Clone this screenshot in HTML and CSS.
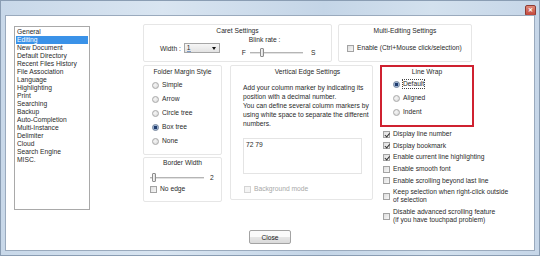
FILE: index.html
```html
<!DOCTYPE html>
<html lang="en">
<head>
    <meta charset="UTF-8">
    <title>Preferences</title>
    <link rel="stylesheet" href="styles.css">
</head>
<body>
    <div class="window">
        <div class="titlebar">
            <span class="close-x">&#10005;</span>
        </div>
        <div class="client">
            <div class="main">
                <ul class="pages">
                    <li>General</li>
                    <li class="selected">Editing</li>
                    <li>New Document</li>
                    <li>Default Directory</li>
                    <li>Recent Files History</li>
                    <li>File Association</li>
                    <li>Language</li>
                    <li>Highlighting</li>
                    <li>Print</li>
                    <li>Searching</li>
                    <li>Backup</li>
                    <li>Auto-Completion</li>
                    <li>Multi-Instance</li>
                    <li>Delimiter</li>
                    <li>Cloud</li>
                    <li>Search Engine</li>
                    <li>MISC.</li>
                </ul>

                <div class="settings">
                    <div class="row-top">
                        <div class="group caret">
                            <div class="group-title">Caret Settings</div>
                            <div class="caret-body">
                                <div class="width-field">
                                    <span>Width :</span>
                                    <span class="combo"><span class="combo-val">1</span><span class="combo-arrow"></span></span>
                                </div>
                                <div class="blink">
                                    <div class="blink-label">Blink rate :</div>
                                    <div class="slider-row">
                                        <span>F</span>
                                        <span class="track blink-track"><span class="thumb"></span></span>
                                        <span>S</span>
                                    </div>
                                </div>
                            </div>
                        </div>
                        <div class="group multi">
                            <div class="group-title">Multi-Editing Settings</div>
                            <label class="check multi-check"><span class="box"></span>Enable (Ctrl+Mouse click/selection)</label>
                        </div>
                    </div>

                    <div class="row-bottom">
                        <div class="col-folder">
                            <div class="group folder">
                                <div class="group-title">Folder Margin Style</div>
                                <div class="radios">
                                    <label class="radio"><span class="dot"></span>Simple</label>
                                    <label class="radio"><span class="dot"></span>Arrow</label>
                                    <label class="radio"><span class="dot"></span>Circle tree</label>
                                    <label class="radio"><span class="dot on"></span>Box tree</label>
                                    <label class="radio"><span class="dot"></span>None</label>
                                </div>
                            </div>
                            <div class="group border-width">
                                <div class="group-title">Border Width</div>
                                <div class="slider-row bw-row">
                                    <span class="track bw-track"><span class="thumb"></span></span>
                                    <span>2</span>
                                </div>
                                <label class="check edge-check"><span class="box"></span>No edge</label>
                            </div>
                        </div>

                        <div class="group vedge">
                            <div class="group-title">Vertical Edge Settings</div>
                            <p class="hint">Add your column marker by indicating its<br>position with a decimal number.<br>You can define several column markers by<br>using white space to separate the different<br>numbers.</p>
                            <div class="edge-input">72 79</div>
                            <label class="check disabled bg-check"><span class="box"></span>Background mode</label>
                        </div>

                        <div class="col-wrap">
                            <div class="group linewrap">
                                <div class="group-title">Line Wrap</div>
                                <div class="radios wrap-radios">
                                    <label class="radio"><span class="dot on"></span><span class="focus">Default</span></label>
                                    <label class="radio"><span class="dot"></span>Aligned</label>
                                    <label class="radio"><span class="dot"></span>Indent</label>
                                </div>
                            </div>
                            <div class="checks">
                                <label class="check"><span class="box on"></span>Display line number</label>
                                <label class="check"><span class="box on"></span>Display bookmark</label>
                                <label class="check"><span class="box on"></span>Enable current line highlighting</label>
                                <label class="check"><span class="box"></span>Enable smooth font</label>
                                <label class="check"><span class="box"></span>Enable scrolling beyond last line</label>
                                <label class="check"><span class="box"></span>Keep selection when right-click outside<br>of selection</label>
                                <label class="check"><span class="box"></span>Disable advanced scrolling feature<br>(if you have touchpad problem)</label>
                            </div>
                        </div>
                    </div>
                </div>
            </div>
            <div class="footer">
                <button class="close-btn">Close</button>
            </div>
        </div>
    </div>
</body>
</html>
```

FILE: styles.css
```css
body {
    margin: 0;
    padding: 0;
    font-family: "Liberation Sans", Arial, sans-serif;
    font-size: 6.7px;
    color: #2a2a2a;
    background: #fff;
}
.window {
    width: 540px;
    height: 256px;
    box-sizing: border-box;
    display: flex;
    flex-direction: column;
    background: linear-gradient(90deg, #c8d8e9, #d9e5f1 30%, #c4d5e7 60%, #d3e1ee 80%, #c6d6e8);
    border: 1px solid #8a9db3;
    padding: 0 4px 4px 4px;
}
.titlebar {
    height: 14px;
    display: flex;
    justify-content: flex-end;
    align-items: flex-start;
}
.close-x {
    width: 9px;
    height: 9px;
    margin-top: 4px;
    margin-right: -1px;
    border-radius: 2px;
    background: linear-gradient(#e08a7a, #c2463a);
    border: 1px solid #8e3b33;
    color: #fff;
    font-size: 6px;
    line-height: 9px;
    text-align: center;
    font-weight: bold;
}
.client {
    flex: 1;
    display: flex;
    flex-direction: column;
    background: #fff;
    border: 1px solid #9aaabd;
    padding: 8px 0 0 8px;
}
.main {
    display: flex;
    align-items: flex-start;
}
.pages {
    list-style: none;
    margin: 2px 0 0 0;
    padding: 1px;
    width: 76px;
    height: 184px;
    box-sizing: border-box;
    border: 1px solid #a9a9a9;
}
.pages li {
    height: 8px;
    line-height: 8px;
    padding-left: 1px;
    white-space: nowrap;
}
.pages li.selected {
    background: #3a92e8;
    color: #fff;
}
.settings {
    margin-left: 53px;
}
.group {
    box-sizing: border-box;
    border: 1px solid #e6e6e6;
    border-radius: 2px;
}
.group-title {
    text-align: center;
    line-height: 8px;
    white-space: nowrap;
}
.row-top {
    display: flex;
    gap: 6px;
}
.caret {
    width: 189px;
    height: 38px;
    padding-top: 2px;
}
.multi {
    width: 134px;
    height: 38px;
    padding-top: 2px;
}
.caret-body {
    display: flex;
    align-items: flex-start;
    padding-left: 16px;
}
.width-field {
    display: flex;
    align-items: center;
    gap: 3px;
    margin-top: 8px;
}
.combo {
    display: flex;
    align-items: center;
    justify-content: space-between;
    width: 36px;
    height: 10px;
    box-sizing: border-box;
    border: 1px solid #a6a6a6;
    background: linear-gradient(#f6f6f6, #e3e3e3);
    padding: 0 3px 0 2px;
}
.combo-val {
    border-bottom: 1px solid #7c9cc8;
    line-height: 7px;
}
.combo-arrow {
    width: 0;
    height: 0;
    border-left: 2.5px solid transparent;
    border-right: 2.5px solid transparent;
    border-top: 3px solid #111;
}
.blink {
    margin-left: 22px;
    margin-top: 1px;
}
.blink-label {
    line-height: 8px;
    padding-left: 7px;
}
.slider-row {
    display: flex;
    align-items: center;
    gap: 4px;
    margin-top: 4px;
    height: 9px;
}
.track {
    position: relative;
    height: 2px;
    background: #e2e2e2;
    border-top: 1px solid #b5b5b5;
    box-sizing: border-box;
}
.blink-track {
    width: 53px;
    margin-right: 4px;
}
.thumb {
    position: absolute;
    top: -5px;
    width: 4px;
    height: 9px;
    box-sizing: border-box;
    border: 1px solid #8d8d8d;
    border-radius: 1px;
    background: linear-gradient(90deg, #f8f8f8, #dcdcdc);
}
.blink-track .thumb {
    left: 10px;
}
.check {
    display: flex;
    align-items: center;
    gap: 3px;
    line-height: 8px;
    white-space: nowrap;
}
.box {
    flex: none;
    position: relative;
    width: 7px;
    height: 7px;
    box-sizing: border-box;
    border: 1px solid #a3a3a3;
    background: linear-gradient(135deg, #dedede, #f7f7f7);
}
.box.on::after {
    content: "";
    position: absolute;
    left: 1.5px;
    top: 0;
    width: 1.5px;
    height: 3.5px;
    border-right: 1px solid #333;
    border-bottom: 1px solid #333;
    transform: rotate(40deg);
}
.multi-check {
    margin: 9px 0 0 8px;
}
.row-bottom {
    display: flex;
    align-items: flex-start;
    margin-top: 3px;
}
.col-folder {
    width: 79px;
}
.folder {
    height: 90px;
    padding-top: 2px;
}
.radios {
    display: flex;
    flex-direction: column;
    gap: 6px;
    margin-top: 5px;
    padding-left: 8px;
}
.radio {
    display: flex;
    align-items: center;
    gap: 2px;
    line-height: 8px;
    white-space: nowrap;
}
.dot {
    flex: none;
    width: 7px;
    height: 7px;
    box-sizing: border-box;
    border-radius: 50%;
    border: 1px solid #a9a9a9;
    background: radial-gradient(circle at 40% 40%, #f6f6f6, #d6d6d6);
    margin-right: 1px;
}
.dot.on {
    border-color: #6d7f99;
    background: radial-gradient(circle, #1f3c6e 0 1.6px, #9bb3d3 2px, #e8eef6 3.5px);
}
.border-width {
    height: 45px;
    margin-top: 2px;
    padding-top: 1px;
}
.bw-row {
    gap: 6px;
    padding-left: 6px;
    margin-top: 6px;
}
.bw-track {
    width: 54px;
}
.bw-track .thumb {
    left: 2px;
}
.edge-check {
    margin: 3px 0 0 6px;
}
.vedge {
    width: 143px;
    height: 135px;
    margin-left: 8px;
    padding: 2px 0 0 12px;
}
.hint {
    margin: 7px 0 0 0;
    line-height: 9px;
    white-space: nowrap;
}
.edge-input {
    width: 119px;
    height: 36px;
    margin-top: 10px;
    box-sizing: border-box;
    border: 1px solid #e4e4e4;
    padding: 2px 2px;
    line-height: 8px;
}
.bg-check {
    margin: 11px 0 0 1px;
}
.check.disabled {
    color: #a8a8a8;
}
.check.disabled .box {
    border-color: #d4d4d4;
    background: #f4f4f4;
}
.col-wrap {
    margin-left: 7px;
}
.linewrap {
    width: 94px;
    height: 62px;
    border: 2px solid #cf2130;
    border-radius: 0;
    padding-top: 1px;
}
.wrap-radios {
    margin-top: 4px;
    padding-left: 11px;
}
.focus {
    outline: 1px dotted #444;
    outline-offset: 0;
}
.checks {
    display: flex;
    flex-direction: column;
    gap: 3.7px;
    margin-top: 3px;
    padding-left: 3px;
}
.footer {
    margin-top: auto;
    display: flex;
    justify-content: center;
    padding: 0 8px 6px 0;
}
.close-btn {
    width: 42px;
    height: 14px;
    padding: 0;
    font-family: "Liberation Sans", Arial, sans-serif;
    font-size: 6.7px;
    color: #222;
    border: 1px solid #a3a3a3;
    border-radius: 2px;
    background: linear-gradient(#fafafa 50%, #e6e6e6 50%, #dadada);
}
```
